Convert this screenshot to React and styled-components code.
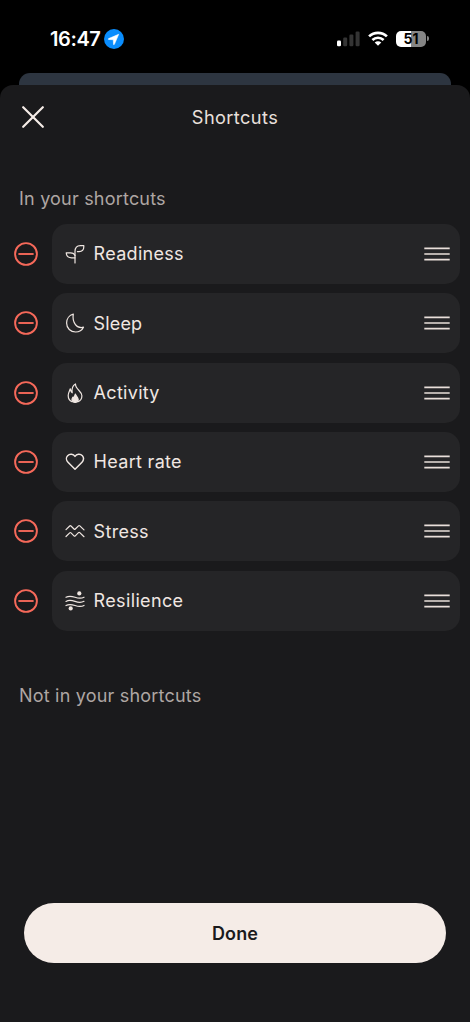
import React from 'react';
import styled, { createGlobalStyle } from 'styled-components';

const shortcuts = [
  { name: 'Readiness', icon: 'readiness', spacing: 0.3 },
  { name: 'Sleep', icon: 'sleep', spacing: 0.15 },
  { name: 'Activity', icon: 'activity', spacing: 0.3 },
  { name: 'Heart rate', icon: 'heart', spacing: 0.3 },
  { name: 'Stress', icon: 'stress', spacing: 0.3 },
  { name: 'Resilience', icon: 'resilience', spacing: 0.35 },
];

const icons = {
  readiness: (
    <>
      <path d="M10 19V7.6C10 3.8 12 1.6 15.4 1.6H18.8V2.8C18.8 6.2 16.9 7.6 14 7.6H12.4" />
      <path d="M10 13.8H6.6C3.6 13.8 1.5 12.2 1.2 8.8H5.6C8.2 8.8 9.5 10.2 10 11.6" />
    </>
  ),
  sleep: (
    <path d="M8.3 1.2C4.4 2.2 1.6 5.7 1.6 10C1.6 15.2 5.6 19 10.6 19C14.2 19 17.1 17.1 18.5 14.2C12 16 6.9 9.6 8.3 1.2Z" />
  ),
  activity: (
    <>
      <path d="M7 18.8C4.5 17.7 3.2 15.4 3.2 12.6C3.2 9.9 4.5 8.1 5.3 5.8C5.7 7.6 5.9 9.1 7.2 9.8C6.6 6 7.5 2.7 10.5 1C10.2 6.2 16.9 8 16.9 12.8C16.9 15.6 15.4 17.9 13 18.8" />
      <path
        d="M10.4 11C10.7 13 13.2 14 13.2 16.6C13.2 18.4 11.9 19.4 10.1 19.4C8.3 19.4 7 18.4 7 16.6C7 15.6 7.5 14.8 8 14.1L8.9 14.8C9.5 13.6 10 12.4 10.4 11Z"
        fill="currentColor"
      />
    </>
  ),
  heart: (
    <path
      strokeWidth="1.5"
      d="M10 17.2L3 10.2C1 8.2 1 5.3 2.6 3.7C4.8 1.5 8.4 2 10 4.4C11.6 2 15.2 1.5 17.4 3.7C19 5.3 19 8.2 17 10.2Z"
    />
  ),
  stress: (
    <>
      <path d="M1 8.7L4.7 5C5.1 4.6 5.6 4.6 6 5L9 8C9.4 8.4 9.9 8.4 10.3 8L13.5 4.8C13.9 4.4 14.4 4.4 14.8 4.8L19 8.9" />
      <path d="M1 15.5L4.7 11.8C5.1 11.4 5.6 11.4 6 11.8L9 14.8C9.4 15.2 9.9 15.2 10.3 14.8L13.5 11.6C13.9 11.2 14.4 11.2 14.8 11.6L19 15.7" />
    </>
  ),
  resilience: (
    <>
      <path d="M1 6.3C4.2 4.5 6.8 5.2 10 6.3S15.8 8 19 6.2" />
      <path d="M1 10.4C4.2 8.6 6.8 9.3 10 10.4S15.8 12.1 19 10.3" />
      <path d="M1 14.5C4.2 12.7 6.8 13.4 10 14.5S15.8 16.2 19 14.4" />
      <circle cx="14.3" cy="2.4" r="2.1" fill="currentColor" stroke="none" />
      <circle cx="5.7" cy="17.4" r="2.1" fill="currentColor" stroke="none" />
    </>
  ),
};

const StatusIcons = () => (
  <StatusGroup>
    <svg width="24" height="16" viewBox="0 0 24 16">
      <rect x="0" y="9.5" width="4" height="5.7" rx="1.2" fill="#fff" />
      <rect x="6.2" y="6.5" width="4" height="8.7" rx="1.2" fill="#343434" />
      <rect x="12.4" y="3.5" width="4" height="11.7" rx="1.2" fill="#343434" />
      <rect x="18.6" y="0.5" width="4" height="14.7" rx="1.2" fill="#343434" />
    </svg>
    <svg width="20" height="16" viewBox="0 0 20 16">
      <g fill="none" stroke="#fff" strokeWidth="2.7">
        <path d="M1.1 5.4C6 .6 14 .6 18.9 5.4" />
        <path d="M4.4 8.9C7.6 6 12.4 6 15.6 8.9" />
      </g>
      <path d="M6.7 11.4C8.6 9.9 11.4 9.9 13.3 11.4L10 14.8Z" fill="#fff" />
    </svg>
    <BatteryWrap>
      <Battery>51</Battery>
      <BatteryTip />
    </BatteryWrap>
  </StatusGroup>
);

const ShortcutRow = ({ shortcut }) => (
  <Row>
    <RemoveButton aria-label="Remove">
      <svg width="24" height="24" viewBox="0 0 24 24" fill="none" stroke="#f6695a" strokeWidth="1.9">
        <circle cx="12" cy="12" r="10.9" />
        <path d="M4.4 12H19.6" />
      </svg>
    </RemoveButton>
    <Card>
      <Icon viewBox="0 0 20 20">{icons[shortcut.icon]}</Icon>
      <CardName $spacing={shortcut.spacing}>{shortcut.name}</CardName>
      <svg width="26" height="14" viewBox="0 0 26 14" stroke="#e9dfda" strokeWidth="1.7">
        <path d="M0.3 1.4H25.7M0.3 7H25.7M0.3 12.6H25.7" />
      </svg>
    </Card>
  </Row>
);

export default function App() {
  return (
    <>
      <GlobalStyle />
      <Screen>
        <StatusBar>
          <Clock>
            <Time>16:47</Time>
            <svg width="20" height="20" viewBox="0 0 20 20">
              <circle cx="10" cy="10" r="10" fill="#0a8dfd" />
              <path
                d="M14.7 5.3L4.7 9.6C4.1 9.9 4.2 10.5 4.8 10.5L9.3 10.7L9.5 15.2C9.5 15.8 10.1 15.9 10.4 15.3Z"
                fill="#fff"
                stroke="#fff"
                strokeWidth="0.6"
                strokeLinejoin="round"
              />
            </svg>
          </Clock>
          <StatusIcons />
        </StatusBar>
        <BackSheet />
        <Sheet>
          <Header>
            <CloseButton aria-label="Close">
              <svg width="22" height="22" viewBox="0 0 22 22" stroke="#f5ece7" strokeWidth="2.2" strokeLinecap="round">
                <path d="M1.2 1.2L20.8 20.8M20.8 1.2L1.2 20.8" />
              </svg>
            </CloseButton>
            <Title>Shortcuts</Title>
          </Header>
          <SectionTitle>In your shortcuts</SectionTitle>
          <List>
            {shortcuts.map((shortcut) => (
              <ShortcutRow key={shortcut.name} shortcut={shortcut} />
            ))}
          </List>
          <SectionTitle $second>Not in your shortcuts</SectionTitle>
          <DoneButton>Done</DoneButton>
        </Sheet>
      </Screen>
    </>
  );
}

const GlobalStyle = createGlobalStyle`
  * {
    box-sizing: border-box;
  }

  body {
    margin: 0;
    background: #000;
    font-family: Inter, 'Liberation Sans', sans-serif;
  }

  button {
    border: 0;
    padding: 0;
    background: none;
    font-family: inherit;
  }

  svg {
    display: block;
  }
`;

const Screen = styled.div`
  display: flex;
  flex-direction: column;
  width: 470px;
  height: 1022px;
  background: #000;
  overflow: hidden;
`;

const StatusBar = styled.div`
  display: flex;
  justify-content: space-between;
  height: 73px;
  padding: 28px 41px 0 50px;
`;

const Clock = styled.div`
  display: flex;
  align-items: center;
  gap: 3px;
  height: 21px;
`;

const Time = styled.span`
  width: 51px;
  color: #fff;
  font-size: 20px;
  font-weight: 600;
  letter-spacing: -0.4px;
  white-space: nowrap;
`;

const StatusGroup = styled.div`
  display: flex;
  align-items: center;
  gap: 7px;
  height: 21px;
`;

const BatteryWrap = styled.div`
  display: flex;
  align-items: center;
  gap: 1px;
  margin-left: 1px;
`;

const Battery = styled.div`
  width: 30px;
  height: 16px;
  border-radius: 5px;
  background: linear-gradient(90deg, #fff 51%, #858585 51%);
  color: #000;
  font-size: 14px;
  font-weight: 700;
  line-height: 16px;
  text-align: center;
`;

const BatteryTip = styled.div`
  width: 2px;
  height: 5px;
  border-radius: 0 2px 2px 0;
  background: #858585;
`;

const BackSheet = styled.div`
  flex-shrink: 0;
  height: 11.5px;
  margin: 0 19px;
  border-radius: 11px 11px 0 0;
  background: #2d3540;
`;

const Sheet = styled.div`
  display: flex;
  flex: 1;
  flex-direction: column;
  border-radius: 13px 13px 0 0;
  background: #1a1a1c;
`;

const Header = styled.div`
  display: grid;
  grid-template-columns: 22px 1fr 22px;
  align-items: center;
  height: 64.5px;
  padding: 0 22px;
`;

const CloseButton = styled.button`
  width: 22px;
  height: 22px;
`;

const Title = styled.div`
  color: #e9e0dc;
  font-size: 18.2px;
  letter-spacing: 0.4px;
  text-align: center;
`;

const SectionTitle = styled.div`
  margin: ${(props) => (props.$second ? '54px' : '39px')} 0 0 19px;
  color: #aea6a3;
  font-size: 18px;
  line-height: 22px;
  letter-spacing: 0.2px;
`;

const List = styled.div`
  display: flex;
  flex-direction: column;
  gap: 9.4px;
  margin-top: 13.8px;
`;

const Row = styled.div`
  display: flex;
  align-items: center;
  height: 60px;
  padding: 0 10px 0 14px;
`;

const RemoveButton = styled.button`
  width: 24px;
  height: 24px;
  margin-right: 14px;
`;

const Card = styled.div`
  display: flex;
  flex: 1;
  align-items: center;
  height: 60px;
  padding: 0 10px 0 13px;
  border-radius: 15px;
  background: #252527;
`;

const Icon = styled.svg`
  width: 20px;
  height: 20px;
  color: #f0e7e2;
  fill: none;
  stroke: currentColor;
  stroke-width: 1.2;
  stroke-linecap: round;
  stroke-linejoin: round;
`;

const CardName = styled.div`
  flex: 1;
  margin-left: 8.6px;
  padding-top: 1px;
  color: #f0e7e2;
  font-size: 18px;
  line-height: 24px;
  letter-spacing: ${(props) => props.$spacing}px;
`;

const DoneButton = styled.button`
  height: 60px;
  margin: auto 24px 59px;
  border-radius: 30px;
  background: #f5ece7;
  color: #1a1a1c;
  font-size: 18px;
  font-weight: 600;
  letter-spacing: 0.1px;
`;
